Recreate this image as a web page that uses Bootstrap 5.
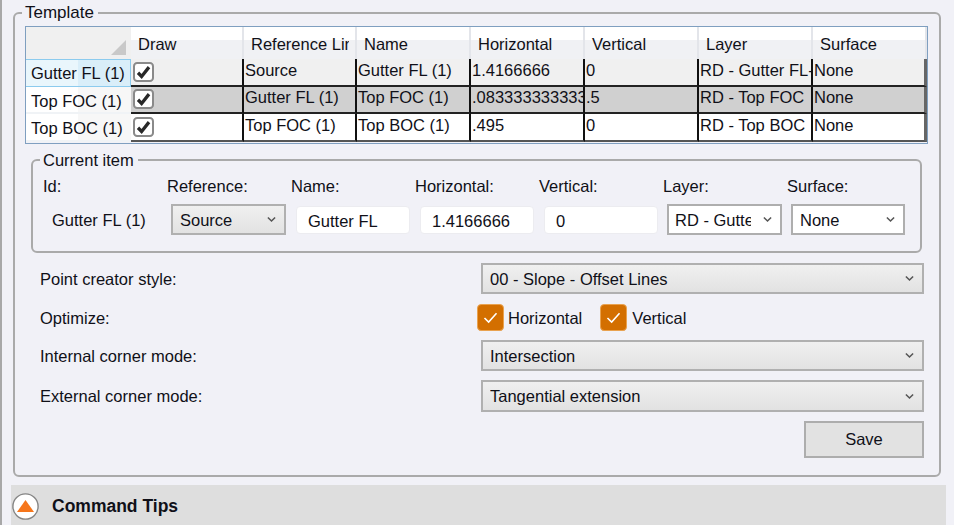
<!DOCTYPE html>
<html lang="en">
<head>
    <meta charset="UTF-8">
    <meta name="viewport" content="width=device-width, initial-scale=1.0">
    <title>Template</title>
    <link href="https://cdn.jsdelivr.net/npm/bootstrap@5.3.0/dist/css/bootstrap.min.css" rel="stylesheet">
    <style>
        :root { --chev: url("data:image/svg+xml,%3Csvg xmlns='http://www.w3.org/2000/svg' viewBox='0 0 10 7'%3E%3Cpath d='M1 1.2l4 4 4-4' fill='none' stroke='%23555' stroke-width='1.7'/%3E%3C/svg%3E"); }
        body {
            width: 954px;
            height: 525px;
            overflow: hidden;
            background: #f1f1f7;
            color: #101018;
            font: 16.5px/18px "Liberation Sans", Arial, sans-serif;
        }
        .app-pane { height: 525px; border-left: 2px solid #a8a8a8; padding: 4px 0 0 9px; }
        .grp {
            min-width: 0;
            margin: 0;
            border: 2px solid #aaa;
            border-radius: 6px;
        }
        .grp > legend {
            float: none;
            width: auto;
            margin: 0 0 0 -3px;
            padding: 0 4px 0 3px;
            font-size: 16.5px;
            line-height: 18px;
        }
        .grp-outer { width: 928px; margin-left: 2px; height: 473px; padding: 4px 10px 0 10px; }
        .grp-outer > legend { font-size: 17px; }
        .grp-inner { width: 891px; margin: 7px 0 0 6px; height: 102px; padding: 0 0 0 10px; }
        .tpl-wrap { width: 903px; height: 118px; border: 1px solid #7f9fc0; overflow: hidden; }
        .tpl-grid { table-layout: fixed; width: 901px; border-collapse: separate; border-spacing: 0; margin: 0; color: #101018; }
        .tpl-grid col { width: 114px; }
        .tpl-grid col:nth-child(1) { width: 105px; }
        .tpl-grid col:nth-child(2), .tpl-grid col:nth-child(3) { width: 113px; }
        .tpl-grid th, .tpl-grid td {
            padding: 0;
            font-weight: 400;
            font-size: 16.5px;
            line-height: 18px;
            white-space: nowrap;
            overflow: hidden;
            vertical-align: middle;
        }
        .tpl-grid thead th {
            height: 32px;
            padding: 2px 6px 0 7px;
            background: linear-gradient(#fff 40%, #f0f1f4 40%);
            border-right: 2px solid #e3e5ea;
            border-bottom: 0;
        }
        .hdr-clip { display: block; overflow: hidden; }
        .tpl-grid thead th.grid-corner { position: relative; background: #f0f0f0; border-right: 0; }
        .grid-corner::after {
            content: "";
            position: absolute;
            right: 5px;
            bottom: 4px;
            border-left: 15px solid transparent;
            border-bottom: 15px solid #c9c9c9;
        }
        .tpl-grid tbody th {
            padding: 2px 0 0 5px;
            border-right: 0;
            border-bottom: 2px solid #f0f3f6;
            background: linear-gradient(90deg, #fff 50%, #f7f7f7 50%);
        }
        .tpl-grid tbody tr:first-child th {
            padding-top: 0;
            background: linear-gradient(90deg, #e9f6fc 50%, #d9eef9 50%);
            border: 1px solid #8ccbee;
            border-left: 0;
        }
        .tpl-grid tbody td {
            height: 27px;
            padding: 0 0 5px 1px;
            border-right: 2px solid #111;
            border-bottom: 2px solid #222;
        }
        .tpl-grid tbody td.cell-chk { padding: 0 0 3px 2px; vertical-align: bottom; }
        .tpl-grid tbody td:last-child { border-right-color: #666; border-right-width: 3px; }
        .tpl-grid tbody tr.row-a td, .tpl-grid tbody tr.row-a th,
        .tpl-grid tbody tr.row-c td, .tpl-grid tbody tr.row-c th { height: 28px; }
        .tpl-grid tbody tr:last-child td { border-bottom-color: #555; }
        .row-a td { background: #f0f0f0; }
        .row-b td { background: #d0d0d0; }
        .row-c td { background: #fff; }
        .grid-check {
            width: 21px;
            height: 20px;
            margin: 0;
            display: block;
            border: 2px solid #8a8a8a;
            border-radius: 0;
        }
        .grid-check.form-check-input:checked {
            background-color: #fff;
            border-color: #8a8a8a;
            background-image: url("data:image/svg+xml,%3Csvg xmlns='http://www.w3.org/2000/svg' viewBox='0 0 17 17'%3E%3Cpath d='M3 9l3.6 3.6L14 3.5' fill='none' stroke='%23282828' stroke-width='3.3'/%3E%3C/svg%3E");
            background-size: 100%;
        }
        .item-cols { display: grid; grid-template-columns: 124px 124px 124px 124px 124px 124px 118px; }
        .item-label { margin-top: 8px; height: 18px; }
        .item-row { margin-top: 9px; }
        .item-id { padding-left: 9px; }
        .fld {
            height: 31px;
            padding: 0 22px 0 7px;
            border-radius: 0;
            font-size: 16.5px;
            line-height: 18px;
            color: #101018;
            box-shadow: none;
            background-position: right 8px center;
            background-size: 9px 7px;
            background-image: var(--chev);
        }
        .fld-gray { background-color: #e6e6e6; background-image: var(--chev), linear-gradient(#f0f0f0, #e2e2e2); background-size: 9px 7px, auto; background-position: right 8px center, 0 0; border: 2px solid #b0b0b0; }
        .fld-white { background-color: #fff; border: 2px solid #aeaeae; }
        .fld-text { height: 28px; width: 114px; margin-top: 1px; padding: 2px 10px 0 11px; border: 1px solid #ececf0; border-radius: 4px; background: #fff; }
        .item-ref { width: 115px; margin-left: 4px; }
        .item-ly { width: 115px; margin-left: 4px; padding: 0 29px 0 6px; }
        .item-sf { width: 114px; margin-left: 4px; }
        .item-t { margin-left: 5px; }
        .opt-row { display: flex; align-items: center; height: 31px; padding-left: 15px; }
        .opt-row:first-child { margin-bottom: 1px; }
        .opt-row.opt-checks { height: 27px; }
        .opt-row:last-child, .opt-row:last-child .fld { height: 32px; }
        .opt-name { width: 441px; flex: none; }
        .opt-checks .opt-name { width: 437px; }
        .opt-sel { width: 443px; flex: none; }
        .opts-box { margin-top: 10px; display: flex; flex-direction: column; gap: 9px; }
        .orange-check {
            width: 27px;
            height: 27px;
            margin: 0 4px 0 0;
            border: 1px solid #e9a24f;
            border-radius: 5px;
            flex: none;
        }
        .opt-lbl-h + .orange-check { margin-right: 5px; }
        .orange-check.form-check-input:checked {
            background-color: #d36f00;
            border-color: #e9a24f;
            background-image: url("data:image/svg+xml,%3Csvg xmlns='http://www.w3.org/2000/svg' viewBox='0 0 27 27'%3E%3Cpath d='M7 14l4.5 4.5L20 9' fill='none' stroke='%23fff' stroke-width='1.7'/%3E%3C/svg%3E");
            background-size: 100%;
        }
        .opt-lbl-h { margin-right: 18px; }
        .save-btn {
            width: 120px;
            height: 37px;
            padding: 0;
            margin: 9px 5px 0 auto;
            display: block;
            background: #e2e2e2;
            border: 2px solid #adadad;
            border-radius: 0;
            color: #101018;
            font-size: 16.5px;
        }
        .tips-bar {
            width: 935px;
            height: 40px;
            margin-top: 8px;
            padding-top: 2px;
            background: #dedede;
            font-size: 17.5px;
            font-weight: 700;
        }
        .tips-btn { width: 27px; height: 27px; margin: 0 13px 0 1px; flex: none; }
    </style>
</head>
<body>
    <div class="app-pane">
        <fieldset class="grp grp-outer">
            <legend>Template</legend>
            <div class="tpl-wrap">
                <table class="table tpl-grid">
                    <colgroup>
                        <col><col><col><col><col><col><col><col>
                    </colgroup>
                    <thead>
                        <tr>
                            <th class="grid-corner"></th>
                            <th>Draw</th>
                            <th><span class="hdr-clip">Reference Line</span></th>
                            <th>Name</th>
                            <th>Horizontal</th>
                            <th>Vertical</th>
                            <th>Layer</th>
                            <th>Surface</th>
                        </tr>
                    </thead>
                    <tbody>
                        <tr class="row-a">
                            <th>Gutter FL (1)</th>
                            <td class="cell-chk"><input class="form-check-input grid-check" type="checkbox" checked></td>
                            <td>Source</td>
                            <td>Gutter FL (1)</td>
                            <td>1.4166666</td>
                            <td>0</td>
                            <td>RD - Gutter FL-1</td>
                            <td>None</td>
                        </tr>
                        <tr class="row-b">
                            <th>Top FOC (1)</th>
                            <td class="cell-chk"><input class="form-check-input grid-check" type="checkbox" checked></td>
                            <td>Gutter FL (1)</td>
                            <td>Top FOC (1)</td>
                            <td>.08333333333333</td>
                            <td>.5</td>
                            <td>RD - Top FOC</td>
                            <td>None</td>
                        </tr>
                        <tr class="row-c">
                            <th>Top BOC (1)</th>
                            <td class="cell-chk"><input class="form-check-input grid-check" type="checkbox" checked></td>
                            <td>Top FOC (1)</td>
                            <td>Top BOC (1)</td>
                            <td>.495</td>
                            <td>0</td>
                            <td>RD - Top BOC</td>
                            <td>None</td>
                        </tr>
                    </tbody>
                </table>
            </div>

            <fieldset class="grp grp-inner">
                <legend>Current item</legend>
                <div class="item-cols">
                    <div class="item-label">Id:</div>
                    <div class="item-label">Reference:</div>
                    <div class="item-label">Name:</div>
                    <div class="item-label">Horizontal:</div>
                    <div class="item-label">Vertical:</div>
                    <div class="item-label">Layer:</div>
                    <div class="item-label">Surface:</div>
                </div>
                <div class="item-cols item-row align-items-center">
                    <div class="item-id">Gutter FL (1)</div>
                    <select class="form-select fld fld-gray item-ref"><option>Source</option></select>
                    <input class="form-control fld fld-text item-t" value="Gutter FL">
                    <input class="form-control fld fld-text item-t" value="1.4166666">
                    <input class="form-control fld fld-text item-t" value="0">
                    <select class="form-select fld fld-white item-ly"><option>RD - Gutter FL-1</option></select>
                    <select class="form-select fld fld-white item-sf"><option>None</option></select>
                </div>
            </fieldset>

            <div class="opts-box">
                <div class="opt-row">
                    <span class="opt-name">Point creator style:</span>
                    <select class="form-select fld fld-gray opt-sel"><option>00 - Slope - Offset Lines</option></select>
                </div>
                <div class="opt-row opt-checks">
                    <span class="opt-name">Optimize:</span>
                    <input class="form-check-input orange-check" type="checkbox" checked id="optH">
                    <label for="optH" class="opt-lbl-h">Horizontal</label>
                    <input class="form-check-input orange-check" type="checkbox" checked id="optV">
                    <label for="optV">Vertical</label>
                </div>
                <div class="opt-row">
                    <span class="opt-name">Internal corner mode:</span>
                    <select class="form-select fld fld-gray opt-sel"><option>Intersection</option></select>
                </div>
                <div class="opt-row">
                    <span class="opt-name">External corner mode:</span>
                    <select class="form-select fld fld-gray opt-sel"><option>Tangential extension</option></select>
                </div>
            </div>
            <button type="button" class="btn save-btn">Save</button>
        </fieldset>

        <div class="tips-bar d-flex align-items-center">
            <svg class="tips-btn" viewBox="0 0 27 27">
                <circle cx="13.5" cy="13.5" r="12.6" fill="#fff" stroke="#858585" stroke-width="1.4"/>
                <path d="M13.5 7L22 19H5z" fill="#f6761b"/>
            </svg>
            <span>Command Tips</span>
        </div>
    </div>
    <script src="https://cdn.jsdelivr.net/npm/bootstrap@5.3.0/dist/js/bootstrap.bundle.min.js"></script>
</body>
</html>
